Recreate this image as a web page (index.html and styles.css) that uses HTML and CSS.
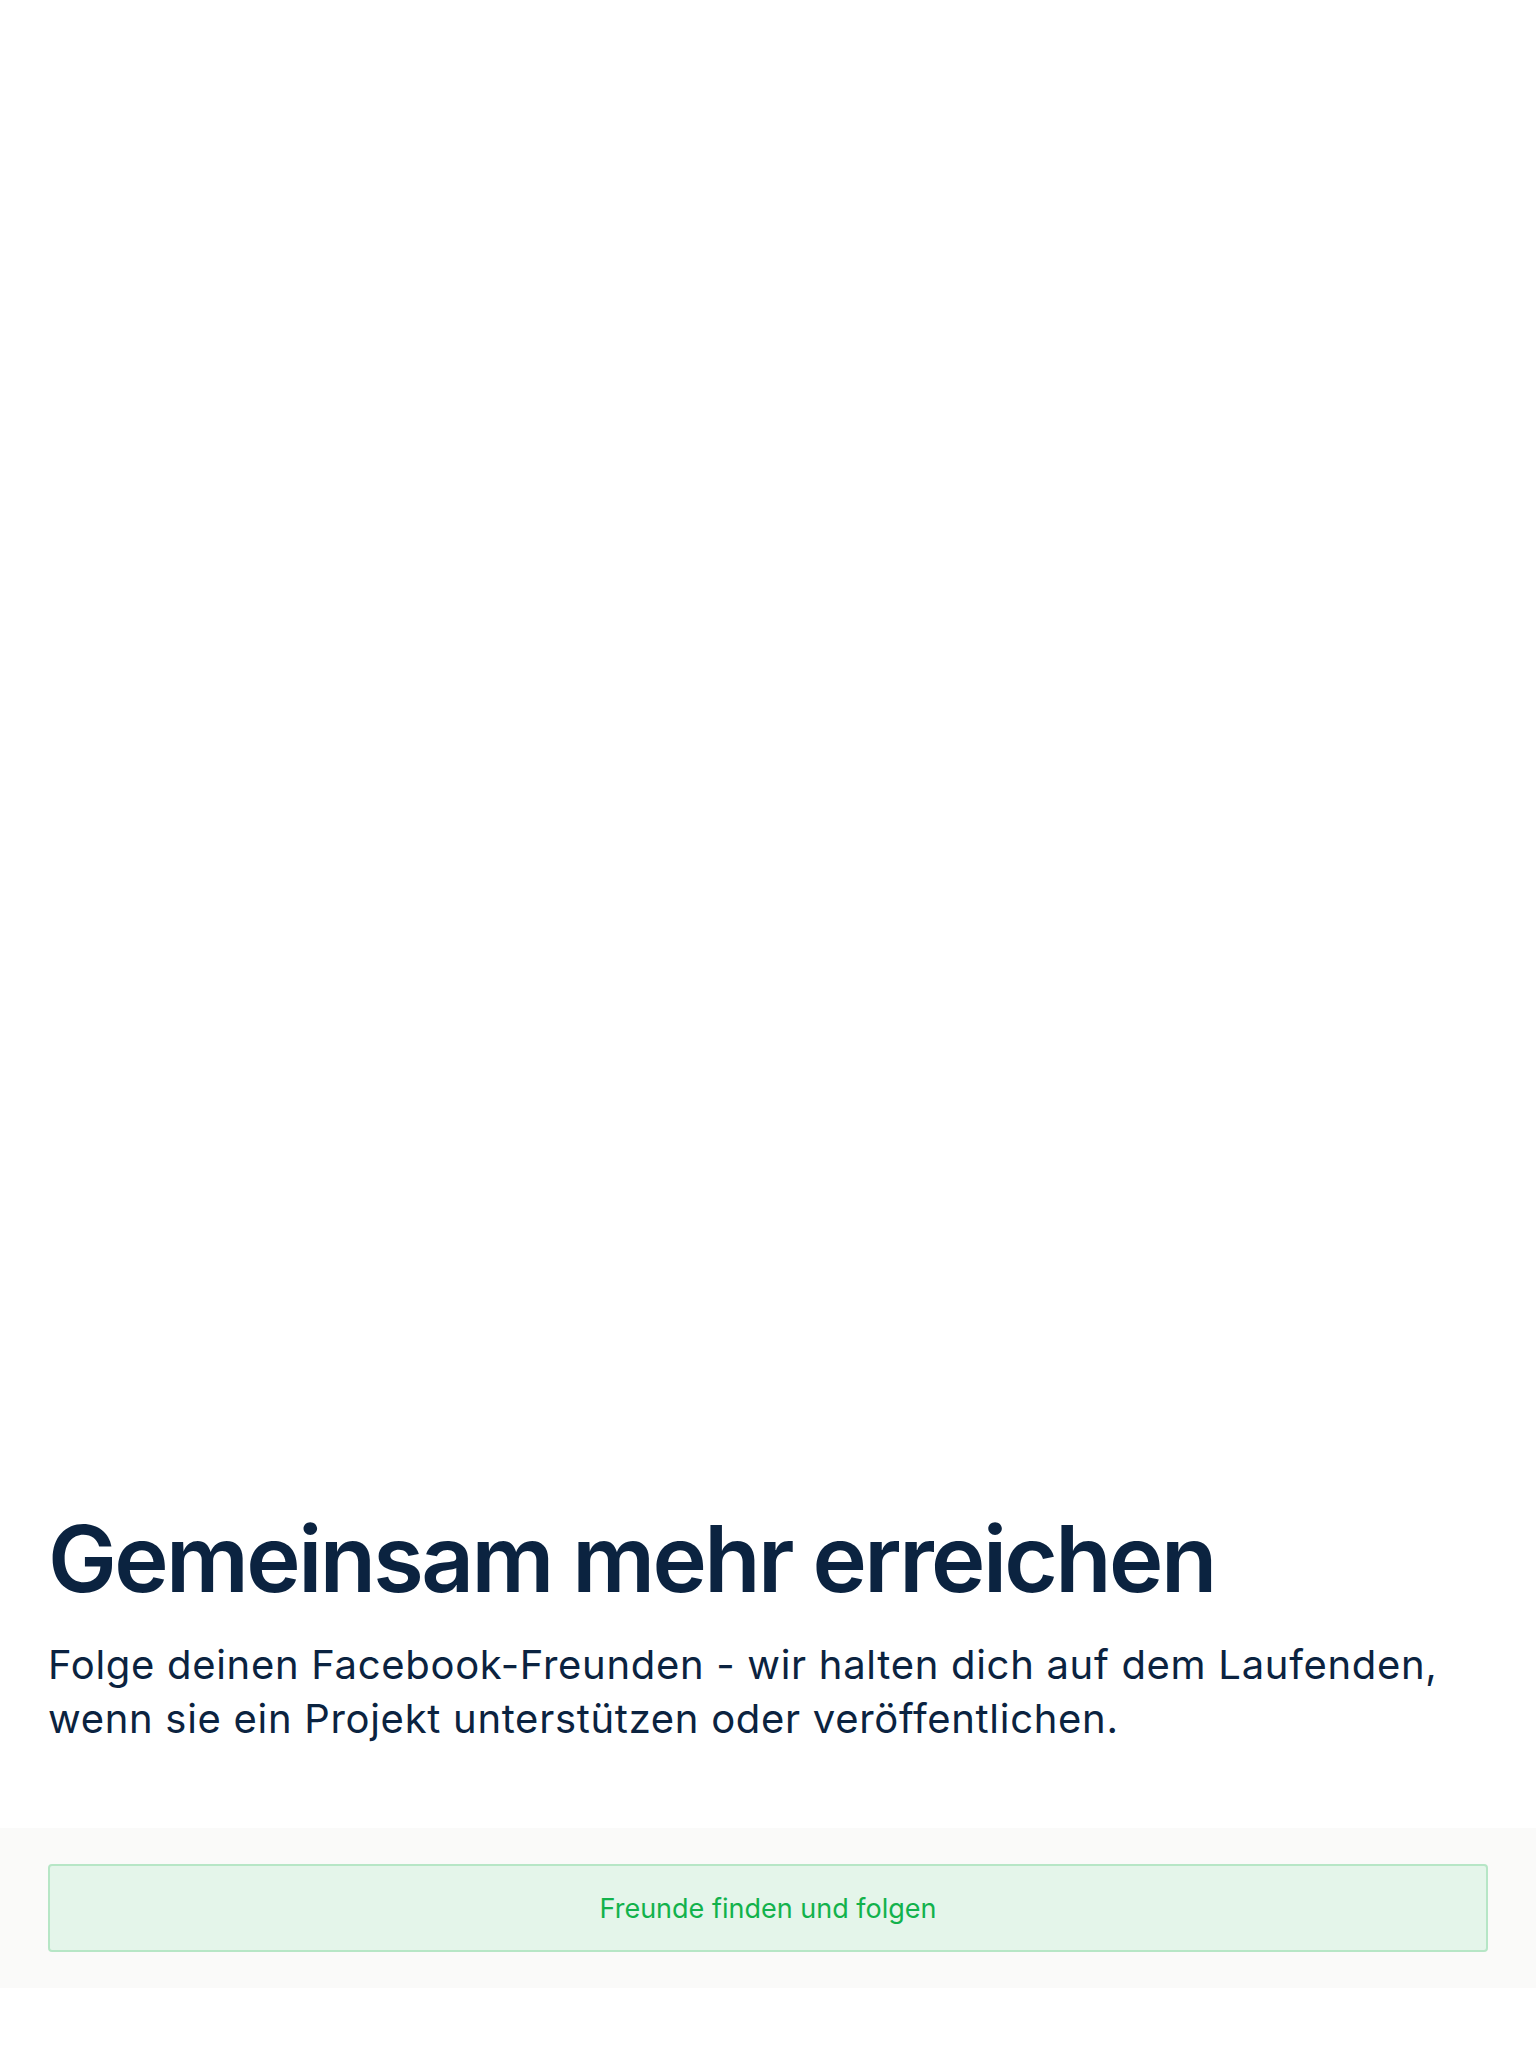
FILE: index.html
```html
<!DOCTYPE html>
<html lang="de">
<head>
<meta charset="utf-8">
<title>Gemeinsam mehr erreichen</title>
<link rel="stylesheet" href="styles.css">
</head>
<body>
<div class="page">
  <div class="spacer"></div>
  <section class="intro">
    <h1 class="title">Gemeinsam mehr erreichen</h1>
    <p class="lead">Folge deinen Facebook-Freunden - wir halten dich auf dem Laufenden, wenn sie ein Projekt unterstützen oder veröffentlichen.</p>
  </section>
  <div class="actions">
    <button class="btn" type="button">Freunde finden und folgen</button>
  </div>
  <div class="bottom"></div>
</div>
</body>
</html>
```

FILE: styles.css
```css
* { box-sizing: border-box; }
html, body { margin: 0; padding: 0; background: #ffffff; }
body { font-family: Inter, "Noto Sans", "Liberation Sans", sans-serif; color: #0b2340; }
.page { min-height: 2048px; display: flex; flex-direction: column; }
.spacer { flex: 1; }
.intro { padding: 0 48px 82px; }
.title { margin: 0 0 29px; font-size: 92px; font-weight: 600; line-height: 100px; letter-spacing: -2.6px; color: #0b2340; }
.lead { margin: 0; font-size: 40px; line-height: 54px; font-weight: 400; letter-spacing: 0.7px; color: #0b2340; }
.actions { background: #fafaf9; padding: 36px 48px; }
.btn { display: block; width: 100%; height: 88px; border: 2px solid #b6e6c6; border-radius: 4px; background: #e4f5ea; color: #12b24c; font-family: Inter, "Noto Sans", sans-serif; font-size: 27px; font-weight: 400; cursor: pointer; }
.bottom { height: 60px; }
```
